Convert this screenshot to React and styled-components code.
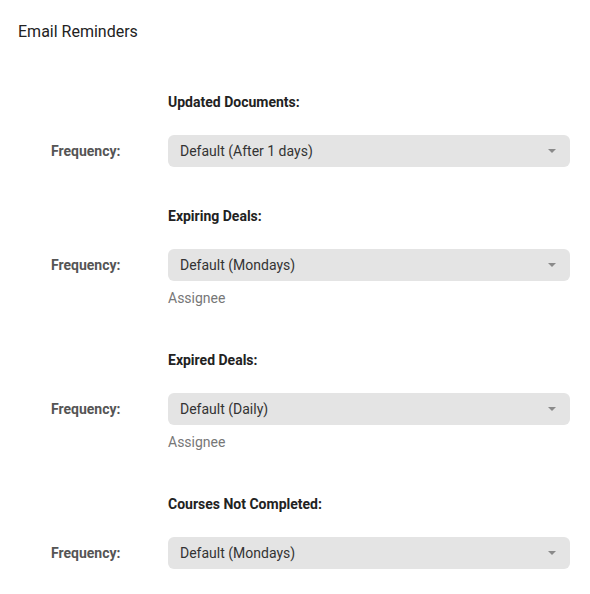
import React from 'react';
import styled, { createGlobalStyle } from 'styled-components';

const GlobalStyle = createGlobalStyle`
  body {
    margin: 0;
    background: #fff;
    font-family: Roboto, "Liberation Sans", sans-serif;
  }
`;

const Page = styled.div`
  width: 590px;
  padding: 22px 0 0 0;
`;

const Title = styled.h1`
  margin: 0 0 50px 18px;
  font-size: 16px;
  line-height: 20px;
  font-weight: 400;
  color: #222;
`;

const Section = styled.section`
  display: grid;
  grid-template-columns: 117px 402px;
  padding-left: 51px;
  margin-bottom: ${(p) => (p.$extra ? '42px' : '39px')};
`;

const Heading = styled.h2`
  grid-column: 2;
  margin: 0 0 23px;
  font-size: 14px;
  line-height: 20px;
  font-weight: 700;
  color: #222;
`;

const Label = styled.label`
  grid-column: 1;
  align-self: center;
  font-size: 14px;
  font-weight: 700;
  color: #555;
`;

const Select = styled.div`
  grid-column: 2;
  display: flex;
  align-items: center;
  justify-content: space-between;
  height: 32px;
  padding: 0 12px;
  background: #e4e4e4;
  border-radius: 6px;
  font-size: 14px;
  color: #333;
`;

const Arrow = styled.span`
  width: 0;
  height: 0;
  margin-right: 2px;
  border-left: 4px solid transparent;
  border-right: 4px solid transparent;
  border-top: 4px solid #8a8a8a;
`;

const Note = styled.div`
  grid-column: 2;
  margin-top: 7px;
  font-size: 14px;
  line-height: 20px;
  color: #777;
`;

const reminders = [
  { title: 'Updated Documents:', value: 'Default (After 1 days)' },
  { title: 'Expiring Deals:', value: 'Default (Mondays)', note: 'Assignee' },
  { title: 'Expired Deals:', value: 'Default (Daily)', note: 'Assignee' },
  { title: 'Courses Not Completed:', value: 'Default (Mondays)' },
];

const App = () => {
  return (
    <Page>
      <GlobalStyle />
      <Title>Email Reminders</Title>
      {reminders.map((r) => (
        <Section key={r.title} $extra={!!r.note}>
          <Heading>{r.title}</Heading>
          <Label>Frequency:</Label>
          <Select>
            <span>{r.value}</span>
            <Arrow />
          </Select>
          {r.note && <Note>{r.note}</Note>}
        </Section>
      ))}
    </Page>
  );
};

export default App;
